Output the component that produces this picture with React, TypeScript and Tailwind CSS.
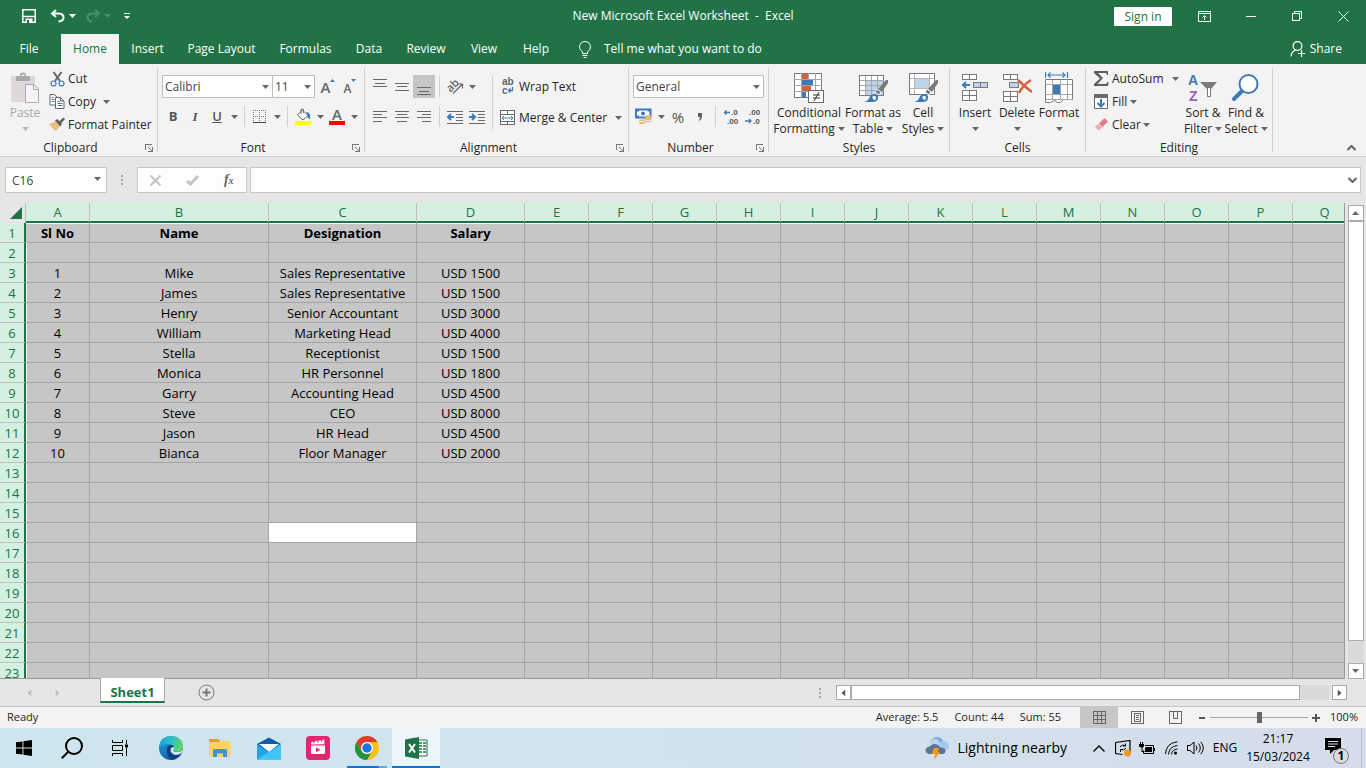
// src/App.tsx
import { type ReactNode } from "react";

const tabs = [
  { name: "Insert", width: "w-[57px]" },
  { name: "Page Layout", width: "w-[91px]" },
  { name: "Formulas", width: "w-[77px]" },
  { name: "Data", width: "w-[50px]" },
  { name: "Review", width: "w-[64px]" },
  { name: "View", width: "w-[52px]" },
  { name: "Help", width: "w-[52px]" },
];

const columns = "ABCDEFGHIJKLMNOPQ".split("");
const columnWidths = ["w-[64px]", "w-[179px]", "w-[148px]", "w-[108px]"];

const sheet: Record<number, string[]> = {
  1: ["Sl No", "Name", "Designation", "Salary"],
  3: ["1", "Mike", "Sales Representative", "USD 1500"],
  4: ["2", "James", "Sales Representative", "USD 1500"],
  5: ["3", "Henry", "Senior Accountant", "USD 3000"],
  6: ["4", "William", "Marketing Head", "USD 4000"],
  7: ["5", "Stella", "Receptionist", "USD 1500"],
  8: ["6", "Monica", "HR Personnel", "USD 1800"],
  9: ["7", "Garry", "Accounting Head", "USD 4500"],
  10: ["8", "Steve", "CEO", "USD 8000"],
  11: ["9", "Jason", "HR Head", "USD 4500"],
  12: ["10", "Bianca", "Floor Manager", "USD 2000"],
};

const rows = Array.from({ length: 23 }, (_, i) => i + 1);

function Caret({ className = "fill-[#666]" }: { className?: string }) {
  return (
    <svg className={`w-[7px] h-1 shrink-0 ${className}`} viewBox="0 0 7 4">
      <path d="M0 0h7L3.500 4z" />
    </svg>
  );
}

function Divider({ tall = false }: { tall?: boolean }) {
  return <div className={`w-px shrink-0 mx-1 bg-[#d0d0d0] ${tall ? "h-[54px]" : "h-[21px]"}`} />;
}

function Tool({ label, active, children }: { label: string; active?: boolean; children: ReactNode }) {
  return (
    <button aria-label={label} className={`flex items-center justify-center w-[22px] h-[23px] shrink-0 ${active ? "bg-[#c5c5c5]" : ""}`}>
      {children}
    </button>
  );
}

function DropArrow({ label }: { label: string }) {
  return (
    <button aria-label={label} className="flex items-center justify-center w-3 h-[23px] shrink-0">
      <Caret />
    </button>
  );
}

function Lines({ y, x }: { y: number[]; x: [number, number][] }) {
  return (
    <svg width="14" height="16" viewBox="0 0 14 16" stroke="#6a6a6a" shapeRendering="crispEdges">
      {y.map((v, i) => (
        <path key={v} d={`M${x[i][0]} ${v + 0.5}H${x[i][1]}`} />
      ))}
    </svg>
  );
}

function Group({ title, width, launcher, children }: { title: string; width: string; launcher?: boolean; children: ReactNode }) {
  return (
    <>
      <section className={`flex flex-col h-[89px] shrink-0 ${width}`}>
        <div className="flex flex-1">{children}</div>
        <div className="flex items-center h-4">
          <span className="flex-1 text-center">{title}</span>
          {launcher && (
            <button aria-label={`${title} settings`} className="w-4 h-4 flex items-center justify-center">
              <svg width="8" height="8" viewBox="0 0 8 8" fill="none" stroke="#777" shapeRendering="crispEdges">
                <path d="M.5 6V.5H7M3 3l4 4M7.500 3v4.500H3" />
              </svg>
            </button>
          )}
        </div>
      </section>
      <div className="w-px h-[84px] mt-px shrink-0 bg-[#d0d0d0]" />
    </>
  );
}

function BigButton({ icon, lines, width, drop = "inline", muted }: { icon: ReactNode; lines: string[]; width: string; drop?: "inline" | "below"; muted?: boolean }) {
  return (
    <button className={`flex flex-col items-center shrink-0 pt-1 whitespace-nowrap ${width} ${muted ? "text-[#a8a8a8]" : ""}`}>
      <span className="flex items-center justify-center h-[34px]">{icon}</span>
      {lines.map((line, i) => (
        <span key={line} className="flex items-center gap-[3px] h-4">
          {line}
          {drop === "inline" && i === lines.length - 1 && <Caret />}
        </span>
      ))}
      {drop === "below" && (
        <span className="flex items-center h-4">
          <Caret className={muted ? "fill-[#b5b5b5]" : "fill-[#666]"} />
        </span>
      )}
    </button>
  );
}

function RowButton({ icon, label }: { icon: ReactNode; label: string }) {
  return (
    <button className="flex items-center h-[23px] whitespace-nowrap">
      <span className="flex items-center justify-center w-[22px]">{icon}</span>
      {label}
    </button>
  );
}

/* ---------- ribbon drawings ---------- */

function PasteIcon() {
  return (
    <svg width="28" height="32" viewBox="0 0 28 32">
      <path d="M0 4h24v26H0z" fill="#dcd8dc" />
      <path d="M5 4h4V2.500q0-2 3-2t3 2V4h4v5H5z" fill="#a9a9a9" />
      <path d="M10.500 4h3V2.500h-3z" fill="#eee" />
      <path d="M14.500 12.500h8.500l4.500 4.500v13.500h-13z" fill="#f8f2fa" stroke="#aaa" />
      <path d="M22.500 13v4.500H28" fill="none" stroke="#aaa" />
    </svg>
  );
}

function CutIcon() {
  return (
    <svg width="15" height="16" viewBox="0 0 15 16" fill="none">
      <path d="M3.500 1l6.500 9M11.500 1L5 10" stroke="#666" strokeWidth="2" />
      <circle cx="3.500" cy="12.500" r="2.500" stroke="#3f7ab8" strokeWidth="1.200" />
      <circle cx="11.500" cy="12.500" r="2.500" stroke="#3f7ab8" strokeWidth="1.200" />
    </svg>
  );
}

function CopyIcon() {
  return (
    <svg width="16" height="15" viewBox="0 0 16 15" fill="#fff" stroke="#666">
      <path d="M1 .5h4.500L8 3v8H1z" />
      <path d="M2.500 3.500h2M2.500 5.500h3M2.500 7.500h3" stroke="#3f7ab8" />
      <path d="M6.500 3.500h5L15 7v7.500H6.500z" />
      <path d="M11.500 3.500V7H15" fill="none" />
      <path d="M8.500 7.500h2M8.500 9.500h5M8.500 11.500h5" stroke="#3f7ab8" />
    </svg>
  );
}

function PainterIcon() {
  return (
    <svg width="16" height="15" viewBox="0 0 16 15">
      <path d="M0 7.500L6 4l5 5.500L6.500 14z" fill="#e9bf7c" />
      <path d="M6 3.500L8.500 2 13 7l-2 2.500z" fill="#5e5e5e" />
      <path d="M10 4.500L14.500.500 16 2l-4 4.500z" fill="#5e5e5e" />
    </svg>
  );
}

function BordersIcon() {
  return (
    <svg width="14" height="14" viewBox="0 0 14 14" fill="none" stroke="#777" shapeRendering="crispEdges">
      <path d="M.5 0v13M12.500 0v13M6.500 0v13M0 .5h13M0 6.500h13" strokeDasharray="1 1" />
      <path d="M0 12.500h13" stroke="#444" />
    </svg>
  );
}

function FillColorIcon() {
  return (
    <svg width="17" height="17" viewBox="0 0 17 17">
      <path d="M2.500 7l5-5 5.500 5.500-5 4.500z" fill="#fff" stroke="#666" />
      <path d="M6 6V1.500q1.500-1.500 2.500 0V5" fill="none" stroke="#666" />
      <path d="M11 4q5 0 4 7-3-.5-2.500-4z" fill="#3f7ab8" />
      <path d="M0 13h16v4H0z" fill="#ff0" />
    </svg>
  );
}

function OrientationIcon() {
  return (
    <svg className="overflow-visible" width="17" height="17" viewBox="0 0 17 17">
      <text x="0" y="12" fontSize="11" fontWeight="600" fill="#666" transform="rotate(-45 5 9)">ab</text>
      <path d="M6 15.500l9-9M11 6h4.500v4.500" fill="none" stroke="#666" strokeWidth="1.200" />
    </svg>
  );
}

function IndentIcon({ out }: { out?: boolean }) {
  return (
    <svg width="16" height="14" viewBox="0 0 16 14">
      <path d="M0 1.500h16M9 4.500h7M9 7.500h7M9 10.500h7M0 13.500h16" stroke="#6a6a6a" shapeRendering="crispEdges" />
      <path d={out ? "M4 4L1 7l3 3M1 7h6" : "M3 4l3 3-3 3M0 7h6"} stroke="#3f7ab8" strokeWidth="2" fill="none" />
    </svg>
  );
}

function WrapIcon() {
  return (
    <svg className="overflow-visible" width="14" height="17" viewBox="0 0 14 17" fontFamily="Liberation Sans, sans-serif" fontWeight="700">
      <text x="1" y="7" fontSize="10" fill="#666">ab</text>
      <text x="1" y="16" fontSize="10" fill="#666">c</text>
      <path d="M11.500 9v3.500H7.500M9.500 10.500l-2 2 2 2" fill="none" stroke="#3f7ab8" strokeWidth="1.300" />
    </svg>
  );
}

function MergeIcon() {
  return (
    <svg width="16" height="16" viewBox="0 0 16 16" fill="#fff" stroke="#6a6a6a">
      <path d="M.5.5h14v14H.5zM.5 4.500h14M.5 11.500h14M7.500.5v4M7.500 11.500v3" shapeRendering="crispEdges" />
      <path d="M2 8h11M4 6L2 8l2 2M11 6l2 2-2 2" fill="none" stroke="#3f7ab8" />
    </svg>
  );
}

function CurrencyIcon() {
  return (
    <svg width="18" height="17" viewBox="0 0 18 17">
      <path d="M1 1.500h14.500v8H1z" fill="#fff" stroke="#3f7ab8" strokeWidth="2" />
      <path d="M1 1.500h3v2H1zM12.500 1.500h3v2h-3zM1 7.500h3v2H1z" fill="#3f7ab8" />
      <circle cx="8" cy="5.500" r="2" fill="#3f7ab8" />
      <ellipse cx="13" cy="8.500" rx="3.500" ry="1.500" fill="#e9bf7c" />
      <path d="M9.500 10.500h7V12h-7zM9.500 12.800h7v1.400h-7zM4 11.500h6V13H4zM4 14h6v1.500q-3 1.500-6 0z" fill="#e9bf7c" />
    </svg>
  );
}

function DecimalIcon({ more }: { more?: boolean }) {
  return (
    <svg className="overflow-visible" width="16" height="16" viewBox="0 0 16 16" fontFamily="Liberation Sans, sans-serif" fontSize="8" fontWeight="700" fill="#555">
      <text x={more ? 8 : 4} y="6">{more ? ".0" : ".00"}</text>
      <text x={more ? 4 : 8} y="15">{more ? ".00" : ".0"}</text>
      <path d={more ? "M7 3.500H1.500M3.500 1.500l-2 2 2 2" : "M0 12h6M4 10l2 2-2 2"} fill="none" stroke="#3f7ab8" strokeWidth="1.400" />
    </svg>
  );
}

function ConditionalIcon() {
  return (
    <svg width="30" height="32" viewBox="0 0 30 32" shapeRendering="crispEdges">
      <path d="M.5 1.500h27v24H.5z" fill="#fff" stroke="#7a7a7a" />
      <path d="M7.500 1v25M14.500 1v25M21.500 1v25M0 7.500h28M0 13.500h28M0 19.500h28" stroke="#a5a5a5" />
      <path d="M8 2h6v5H8zM8 14h9v5H8z" fill="#d8603e" />
      <path d="M8 8h11v5H8zM8 20h4v6H8z" fill="#3f7ab8" />
      <path d="M14.500 18.500h15v12h-15z" fill="#fff" stroke="#6a6a6a" />
      <path d="M19 23h7M19 26h7M25 20l-5 9" stroke="#333" shapeRendering="auto" />
    </svg>
  );
}

function Brush() {
  return (
    <>
      <path d="M29 8l2 0v3l-6 9-4-3z" fill="#7a7a7a" />
      <path d="M20 17l4 3-2 3-4-3z" fill="#7a7a7a" stroke="#f3f3f3" />
      <path d="M7 30q5-1 6-6 5-4 8 0 1 6-6 6z" fill="#3f7ab8" />
      <path d="M15 25q3-2 4 0 0 3-2 3z" fill="#fff" />
    </>
  );
}

function TableIcon() {
  return (
    <svg width="32" height="32" viewBox="0 0 32 32">
      <g shapeRendering="crispEdges">
        <path d="M2.500 3.500h24v20h-24z" fill="#fff" stroke="#7a7a7a" />
        <path d="M9 9h17v14H9z" fill="#bed3ea" />
        <path d="M8.500 4v19M14.500 4v19M20.500 4v19M3 8.500h24M3 13.500h24M3 18.500h24" stroke="#a5a5a5" />
      </g>
      <Brush />
    </svg>
  );
}

function CellStylesIcon() {
  return (
    <svg width="32" height="32" viewBox="0 0 32 32">
      <g shapeRendering="crispEdges">
        <path d="M2.500 1.500h25v21h-25z" fill="#fff" stroke="#7a7a7a" />
        <path d="M7.500 2v20M22.500 2v20M3 6.500h24M3 16.500h24" stroke="#b5b5b5" />
        <path d="M8 7h14v9H8z" fill="#bed3ea" />
      </g>
      <Brush />
    </svg>
  );
}

function InsertIcon() {
  return (
    <svg width="28" height="30" viewBox="0 0 28 30" fill="#fff" stroke="#7a7a7a" shapeRendering="crispEdges">
      <path d="M1.500 1.500h14v5h-14zM8.500 1.500v5M1.500 17.500h14v10h-14zM8.500 17.500v10M1.500 22.500h14" />
      <path d="M12.500 9.500h14v5h-14zM19.500 9.500v5" fill="#bed3ea" />
      <path d="M9 12H2M5 9l-3 3 3 3" fill="none" stroke="#3f7ab8" strokeWidth="2" shapeRendering="auto" />
    </svg>
  );
}

function DeleteIcon() {
  return (
    <svg width="30" height="30" viewBox="0 0 30 30" fill="#fff" stroke="#7a7a7a" shapeRendering="crispEdges">
      <path d="M1.500 1.500h14v5h-14zM8.500 1.500v5M1.500 18.500h14v10h-14zM8.500 18.500v10M1.500 23.500h14" />
      <path d="M7.500 9.500h9v5h-9z" fill="#bed3ea" />
      <path d="M16 7q7 7 14 12M29 7q-8 5-12 13" fill="none" stroke="#d8603e" strokeWidth="2.500" shapeRendering="auto" />
    </svg>
  );
}

function FormatIcon() {
  return (
    <svg width="28" height="32" viewBox="0 0 28 32" fill="#fff">
      <path d="M.5 0v6M22.500 0v6M3 3h17M5.500.500L3 3l2.500 2.500M17.500.500L20 3l-2.500 2.500" stroke="#3f7ab8" strokeWidth="1.200" fill="none" />
      <path d="M.5 7.500h27v20h-9l-3 3h-3l-3-2-4 2h-5z" stroke="#7a7a7a" />
      <path d="M7.500 8v19M15.500 8v19M22.500 8v19M1 12.500h26M1 22.500h26M1 27.500h26" stroke="#a5a5a5" shapeRendering="crispEdges" />
      <path d="M8 13h7v9H8z" fill="#3f7ab8" />
    </svg>
  );
}

function SortIcon() {
  return (
    <svg className="overflow-visible" width="30" height="30" viewBox="0 0 30 30" fontFamily="Liberation Sans, sans-serif" fontSize="14" fontWeight="700">
      <text x="0" y="12" fill="#3f7ab8">A</text>
      <text x="1" y="28" fill="#9862b8">Z</text>
      <path d="M12 9h17l-6 7v8h-4v-8z" fill="#7a7a7a" />
      <path d="M20 15h2v8h-2z" fill="#fff" />
    </svg>
  );
}

function FindIcon() {
  return (
    <svg width="30" height="30" viewBox="0 0 30 30">
      <path d="M3 26l9-9" stroke="#3f7ab8" strokeWidth="4" strokeLinecap="round" />
      <circle cx="17.500" cy="11" r="9" fill="#fff" stroke="#3f7ab8" strokeWidth="2" />
    </svg>
  );
}

/* ---------- window pieces ---------- */

function TitleBar() {
  return (
    <div className="grid grid-cols-[1fr_auto_1fr] items-start h-[34px] text-white">
      <div className="flex items-center h-8 pl-[18px]">
        <button aria-label="Save" className="w-[22px] flex justify-center">
          <svg width="14" height="14" viewBox="0 0 14 14" fill="none" stroke="#fff" strokeWidth="1.500">
            <path d="M.8.8h12.400v12.400H.8z" />
            <path d="M1 7.500h12" />
            <path d="M3.500 9.500h7V14h-7z" fill="#fff" stroke="none" />
            <path d="M5 11h2v3H5z" fill="#217346" stroke="none" />
          </svg>
        </button>
        <button aria-label="Undo" className="w-[35px] flex justify-center">
          <svg width="15" height="14" viewBox="0 0 15 14" fill="none" stroke="#fff" strokeWidth="2">
            <path d="M6 1L2 4.500 6 8M2 4.500h7q4.500.5 4.500 4t-5 4" />
          </svg>
        </button>
        <Caret className="fill-white -ml-[6px]" />
        <button aria-label="Redo" className="w-[34px] flex justify-center text-[#4a8f6a]">
          <svg width="15" height="14" viewBox="0 0 15 14" fill="none" stroke="currentColor" strokeWidth="2">
            <path d="M9 1l4 3.500L9 8M13 4.500H6q-4.500.5-4.500 4t5 4" />
          </svg>
        </button>
        <Caret className="fill-[#4a8f6a] -ml-[6px]" />
        <button aria-label="Customize Quick Access Toolbar" className="w-8 flex justify-center">
          <svg width="6" height="6" viewBox="0 0 6 6" fill="#fff">
            <path d="M0 0h6v1H0zM0 3h6L3 6z" />
          </svg>
        </button>
      </div>
      <h1 className="h-8 leading-8 whitespace-pre">New Microsoft Excel Worksheet  -  Excel</h1>
      <div className="flex items-center justify-end h-8">
        <button className="bg-white text-[#217346] w-[58px] h-[19px] leading-[19px] rounded-[1px] mr-[9px]">Sign in</button>
        <button aria-label="Ribbon Display Options" className="w-[47px] flex justify-center">
          <svg width="13" height="11" viewBox="0 0 13 11" fill="none" stroke="#fff">
            <path d="M.5.5h12v10H.5zM.5 2.500h12M6.500 9V5M4.500 6.500l2-2 2 2" />
          </svg>
        </button>
        <button aria-label="Minimize" className="w-[46px] flex justify-center">
          <svg width="10" height="1"><path d="M0 0h10v1H0z" fill="#fff" /></svg>
        </button>
        <button aria-label="Restore" className="w-[46px] flex justify-center">
          <svg width="10" height="10" viewBox="0 0 10 10" fill="none" stroke="#fff" shapeRendering="crispEdges">
            <path d="M.5 2.500h7v7h-7zM2.500 2.500v-2h7v7h-2" />
          </svg>
        </button>
        <button aria-label="Close" className="w-[46px] flex justify-center">
          <svg width="11" height="11" viewBox="0 0 11 11" stroke="#fff"><path d="M.5.5l10 10M10.500.5l-10 10" /></svg>
        </button>
      </div>
    </div>
  );
}

function TabBar() {
  return (
    <nav className="flex h-[30px] text-white whitespace-nowrap">
      <button className="w-[58px] mr-[3px]">File</button>
      <button className="w-[58px] bg-[#f3f3f3] text-[#217346]">Home</button>
      {tabs.map((tab) => (
        <button key={tab.name} className={tab.width}>{tab.name}</button>
      ))}
      <button className="flex items-center gap-[13px] ml-[17px]">
        <svg width="12" height="17" viewBox="0 0 12 17" fill="none" stroke="#fff">
          <path d="M3.500 12.500V11Q.5 8.500.5 5.800.8.800 6 .5q5.200.3 5.500 5.300 0 2.700-3 5.200v1.500zM3.500 14.500h5M4.500 16.500h3" />
        </svg>
        Tell me what you want to do
      </button>
      <button className="flex items-center gap-1 ml-auto mr-6">
        <svg width="16" height="16" viewBox="0 0 16 16" fill="none" stroke="#fff" strokeWidth="1.200">
          <circle cx="7.500" cy="5" r="4.400" />
          <path d="M1 15.500q.5-5 4.500-6.500M8 12.500h7M11.500 9v7" />
        </svg>
        Share
      </button>
    </nav>
  );
}

function Combo({ label, value, width }: { label: string; value: string; width: string }) {
  return (
    <div className={`relative ${width}`}>
      <select aria-label={label} className="appearance-none w-full h-[23px] pl-[2px] bg-white border border-[#bebebe] text-[#444] outline-none">
        <option>{value}</option>
      </select>
      <Caret className="absolute right-1 top-[10px] pointer-events-none fill-[#666]" />
    </div>
  );
}

function Ribbon() {
  return (
    <div className="flex h-[93px] pt-[3px] bg-[#f3f3f3] border-b border-[#d0d0d0] text-[#262626]">
      <Group title="Clipboard" width="w-[157px]" launcher>
        <BigButton icon={<PasteIcon />} lines={["Paste"]} width="w-[46px] pl-1" drop="below" muted />
        <div className="flex flex-col">
          <RowButton icon={<CutIcon />} label="Cut" />
          <div className="flex gap-1">
            <RowButton icon={<CopyIcon />} label="Copy" />
            <DropArrow label="Copy options" />
          </div>
          <RowButton icon={<PainterIcon />} label="Format Painter" />
        </div>
      </Group>

      <Group title="Font" width="w-[206px]" launcher>
        <div className="flex flex-col gap-[7px] pt-2 pl-1">
          <div className="flex">
            <Combo label="Font" value="Calibri" width="w-[111px]" />
            <Combo label="Font size" value="11" width="w-[43px] -ml-px" />
            <div className="flex pl-[2px]">
              <Tool label="Increase font size">
                <span className="text-[15px] font-semibold text-[#666]">A</span>
                <svg className="mb-3" width="5" height="3"><path d="M0 3h5L2.500 0z" fill="#3f7ab8" /></svg>
              </Tool>
              <Tool label="Decrease font size">
                <span className="text-xs font-semibold text-[#666] pt-1">A</span>
                <svg className="mb-3" width="5" height="3"><path d="M0 0h5L2.500 3z" fill="#3f7ab8" /></svg>
              </Tool>
            </div>
          </div>
          <div className="flex items-center text-[13px] text-[#555]">
            <Tool label="Bold"><b>B</b></Tool>
            <Tool label="Italic"><i className="font-['Liberation_Serif',serif] font-bold">I</i></Tool>
            <Tool label="Underline"><span className="font-semibold underline">U</span></Tool>
            <DropArrow label="Underline options" />
            <Divider />
            <Tool label="Borders"><BordersIcon /></Tool>
            <DropArrow label="Border options" />
            <Divider />
            <Tool label="Fill color"><FillColorIcon /></Tool>
            <DropArrow label="Fill color options" />
            <Tool label="Font color"><span className="w-4 h-[17px] leading-3 text-[15px] font-semibold text-[#666] border-b-4 border-[#f00]">A</span></Tool>
            <DropArrow label="Font color options" />
          </div>
        </div>
      </Group>

      <Group title="Alignment" width="w-[263px]" launcher>
        <div className="flex pt-2 pl-1">
          <div className="flex flex-col gap-[7px]">
            <div className="flex items-center">
              <Tool label="Top align"><Lines y={[0, 4, 7]} x={[[0, 14], [2, 12], [0, 14]]} /></Tool>
              <Tool label="Middle align"><Lines y={[4, 7, 11]} x={[[0, 14], [2, 12], [0, 14]]} /></Tool>
              <Tool label="Bottom align" active><Lines y={[8, 12, 15]} x={[[0, 14], [2, 12], [0, 14]]} /></Tool>
              <Divider />
              <Tool label="Orientation"><OrientationIcon /></Tool>
              <DropArrow label="Orientation options" />
            </div>
            <div className="flex items-center">
              <Tool label="Align left"><Lines y={[2, 5, 8, 12]} x={[[0, 14], [0, 9], [0, 14], [0, 9]]} /></Tool>
              <Tool label="Center"><Lines y={[2, 5, 8, 12]} x={[[0, 14], [2, 12], [0, 14], [2, 12]]} /></Tool>
              <Tool label="Align right"><Lines y={[2, 5, 8, 12]} x={[[0, 14], [5, 14], [0, 14], [5, 14]]} /></Tool>
              <Divider />
              <Tool label="Decrease indent"><IndentIcon out /></Tool>
              <Tool label="Increase indent"><IndentIcon /></Tool>
            </div>
          </div>
          <Divider tall />
          <div className="flex flex-col gap-2">
            <RowButton icon={<WrapIcon />} label="Wrap Text" />
            <div className="flex gap-[5px]">
              <RowButton icon={<MergeIcon />} label="Merge & Center" />
              <DropArrow label="Merge options" />
            </div>
          </div>
        </div>
      </Group>

      <Group title="Number" width="w-[139px]" launcher>
        <div className="flex flex-col gap-[7px] pt-2 pl-1">
          <Combo label="Number format" value="General" width="w-[131px]" />
          <div className="flex items-center text-[#555]">
            <Tool label="Accounting format"><CurrencyIcon /></Tool>
            <DropArrow label="Accounting options" />
            <Tool label="Percent style"><span className="text-[15px]">%</span></Tool>
            <Tool label="Comma style">
              <svg width="6" height="8" viewBox="0 0 6 8" fill="#5e5e5e"><path d="M1 0h4v4q-.5 3-3.500 4 1.500-2 1.500-4H1z" /></svg>
            </Tool>
            <Divider />
            <Tool label="Increase decimal"><DecimalIcon more /></Tool>
            <Tool label="Decrease decimal"><DecimalIcon /></Tool>
          </div>
        </div>
      </Group>

      <Group title="Styles" width="w-[180px]">
        <div className="flex pl-[3px]">
          <BigButton icon={<ConditionalIcon />} lines={["Conditional", "Formatting"]} width="w-[74px]" />
          <BigButton icon={<TableIcon />} lines={["Format as", "Table"]} width="w-[54px]" />
          <BigButton icon={<CellStylesIcon />} lines={["Cell", "Styles"]} width="w-[46px]" />
        </div>
      </Group>

      <Group title="Cells" width="w-[135px]">
        <div className="flex pl-1">
          <BigButton icon={<InsertIcon />} lines={["Insert"]} width="w-[42px]" drop="below" />
          <BigButton icon={<DeleteIcon />} lines={["Delete"]} width="w-[42px]" drop="below" />
          <BigButton icon={<FormatIcon />} lines={["Format"]} width="w-[42px]" drop="below" />
        </div>
      </Group>

      <Group title="Editing" width="w-[186px]">
        <div className="flex pl-1">
          <div className="flex flex-col w-[91px]">
            <div className="flex justify-between">
              <RowButton
                icon={<svg width="15" height="15" viewBox="0 0 15 15"><path d="M0 0h14v4h-1l-1-2H4l5 5-5.500 6H12l1.500-2h1l-.5 4H0v-2l6-5.500L0 2z" fill="#5e5e5e" /></svg>}
                label="AutoSum"
              />
              <DropArrow label="AutoSum options" />
            </div>
            <div className="flex">
              <RowButton
                icon={
                  <svg width="14" height="15" viewBox="0 0 14 15">
                    <path d="M.5.5h13v14H.5z" fill="#fff" stroke="#6a6a6a" />
                    <path d="M0 0h14v4H0z" fill="#6a6a6a" />
                    <path d="M7 5v8M3.500 9L7 12.500 10.500 9" fill="none" stroke="#3f7ab8" strokeWidth="2" />
                  </svg>
                }
                label="Fill"
              />
              <DropArrow label="Fill options" />
            </div>
            <div className="flex">
              <RowButton
                icon={
                  <svg width="13" height="13" viewBox="0 0 13 13">
                    <path d="M4 5.500L9.500 0 13 3.500 7.500 9z" fill="#e6788c" />
                    <path d="M3.500 6L0 9l3.500 3.500 3.500-3z" fill="#f0a5b2" />
                  </svg>
                }
                label="Clear"
              />
              <DropArrow label="Clear options" />
            </div>
          </div>
          <BigButton icon={<SortIcon />} lines={["Sort &", "Filter"]} width="w-11" />
          <BigButton icon={<FindIcon />} lines={["Find &", "Select"]} width="w-[42px]" />
        </div>
      </Group>

      <button aria-label="Collapse the Ribbon" className="self-end ml-auto w-[30px] h-4 flex items-center justify-center">
        <svg width="9" height="6" viewBox="0 0 9 6" fill="none" stroke="#666" strokeWidth="2"><path d="M.5 5l4-4 4 4" /></svg>
      </button>
    </div>
  );
}

function Grip() {
  return (
    <div className="flex flex-col gap-[2px]">
      <i className="size-[2px] bg-[#a8a8a8]" />
      <i className="size-[2px] bg-[#a8a8a8]" />
      <i className="size-[2px] bg-[#a8a8a8]" />
    </div>
  );
}

function FormulaBar() {
  return (
    <div className="flex items-center h-[46px] px-[5px]">
      <div className="relative w-[102px]">
        <input aria-label="Name Box" defaultValue="C16" className="w-full h-[26px] pl-[6px] bg-[#fdfdfd] border border-[#c6c6c6] text-[#444] outline-none" />
        <Caret className="absolute right-[6px] top-[10px] fill-[#666]" />
      </div>
      <div className="w-[30px] flex justify-center"><Grip /></div>
      <div className="flex items-center justify-around w-[110px] h-[26px] bg-[#fdfdfd] border border-[#c6c6c6] mr-[3px]">
        <button aria-label="Cancel">
          <svg width="11" height="11" viewBox="0 0 11 11" stroke="#c4c4c4" strokeWidth="2"><path d="M.5.5l10 10M10.500.5l-10 10" /></svg>
        </button>
        <button aria-label="Enter">
          <svg width="13" height="11" viewBox="0 0 13 11" fill="none" stroke="#c4c4c4" strokeWidth="3"><path d="M1 6l3.500 3L12 1" /></svg>
        </button>
        <button aria-label="Insert Function" className="font-['Liberation_Serif',serif] italic font-bold text-sm text-[#666]">
          f<sub className="text-[10px] bottom-0">x</sub>
        </button>
      </div>
      <div className="relative flex-1">
        <input aria-label="Formula Bar" className="w-full h-[26px] px-2 bg-[#fdfdfd] border border-[#c6c6c6] outline-none" />
        <svg className="absolute right-1 top-[10px]" width="9" height="6" viewBox="0 0 9 6" fill="none" stroke="#666" strokeWidth="2"><path d="M.5 1l4 4 4-4" /></svg>
      </div>
    </div>
  );
}

function Grid() {
  return (
    <div className="flex flex-1 min-h-0">
      <div className="flex-1 min-w-0 overflow-hidden border-r border-b border-[#9a9a9a]">
        <table className="table-fixed w-[1357px] border-separate border-spacing-0 text-center">
          <colgroup>
            <col className="w-[26px]" />
            {columns.map((c, i) => (
              <col key={c} className={columnWidths[i] ?? "w-[64px]"} />
            ))}
          </colgroup>
          <thead>
            <tr className="h-5 text-[#217346] text-[13px] leading-4">
              <th aria-label="Select all" className="p-0 border-r border-[#bfbfbf] bg-[#e6e6e6]">
                <svg className="ml-[10px]" width="12" height="12"><path d="M12 0v12H0z" fill="#217346" /></svg>
              </th>
              {columns.map((c) => (
                <th key={c} className="p-0 font-normal bg-[#d3f0e0] border-r border-r-[#bfbfbf] border-b-2 border-b-[#217346]">{c}</th>
              ))}
            </tr>
          </thead>
          <tbody>
            {rows.map((r) => (
              <tr key={r} className={`h-5 ${r === 1 ? "font-bold [&>td]:shadow-[inset_0_1px_0_#fff]" : ""}`}>
                <th className="p-0 font-normal text-[13px] leading-4 text-[#217346] bg-[#d3f0e0] border-b border-b-[#bfbfbf] border-r-2 border-r-[#217346]">{r}</th>
                {columns.map((c, i) => (
                  <td
                    key={c}
                    className={`p-0 text-[13px] leading-4 text-black whitespace-nowrap border-r border-b border-[#a5a5a5] ${
                      r === 16 && c === "C" ? "bg-white" : "bg-[#c6c6c6]"
                    } ${i === 0 ? "shadow-[inset_1px_0_0_#fff]" : ""}`}
                  >
                    {sheet[r]?.[i]}
                  </td>
                ))}
              </tr>
            ))}
          </tbody>
        </table>
      </div>
      <div className="flex flex-col items-center w-[21px] pt-[2px]">
        <button aria-label="Scroll up" className="size-4 shrink-0 flex items-center justify-center bg-white border border-[#ababab]">
          <Caret className="rotate-180 fill-[#666]" />
        </button>
        <div className="flex-1 w-4 bg-[#dadada]">
          <div className="h-[95%] bg-white border border-[#ababab]" />
        </div>
        <button aria-label="Scroll down" className="size-4 shrink-0 flex items-center justify-center bg-white border border-[#ababab]">
          <Caret />
        </button>
      </div>
    </div>
  );
}

function SheetTabs() {
  return (
    <div className="flex h-[27px]">
      <div className="flex items-center gap-[21px] w-[100px] pl-[26px]">
        <button aria-label="Previous sheet"><Caret className="rotate-90 fill-[#bcbcbc]" /></button>
        <button aria-label="Next sheet"><Caret className="-rotate-90 fill-[#bcbcbc]" /></button>
      </div>
      <button className="w-[65px] h-[25px] pt-1 -mt-px bg-white border-x border-x-[#ababab] border-b-2 border-b-[#217346] text-[#217346] text-[13px] leading-4 font-bold">Sheet1</button>
      <button aria-label="New sheet" className="w-[82px] flex items-center justify-center">
        <svg width="17" height="17" viewBox="0 0 17 17" fill="none" stroke="#777">
          <circle cx="8.500" cy="8.500" r="7.500" />
          <path d="M4.500 8.500h8M8.500 4.500v8" strokeWidth="2" />
        </svg>
      </button>
      <div className="flex items-center ml-auto w-[547px]">
        <div className="w-[17px]"><Grip /></div>
        <button aria-label="Scroll left" className="size-[15px] flex items-center justify-center bg-white border border-[#ababab]">
          <Caret className="rotate-90 fill-[#555]" />
        </button>
        <div className="w-[478px] h-[15px] bg-[#dadada]">
          <div className="w-[449px] h-full bg-white border border-[#ababab]" />
        </div>
        <button aria-label="Scroll right" className="size-[15px] ml-[3px] flex items-center justify-center bg-white border border-[#ababab]">
          <Caret className="-rotate-90 fill-[#555]" />
        </button>
      </div>
    </div>
  );
}

function StatusBar() {
  return (
    <footer className="flex items-center h-[22px] pl-[7px] pr-2 bg-[#f3f3f3] border-t border-[#c6c6c6] text-[11px] text-[#262626] whitespace-nowrap">
      <span>Ready</span>
      <div className="flex gap-4 ml-auto mr-[19px]">
        <span>Average: 5.5</span>
        <span>Count: 44</span>
        <span>Sum: 55</span>
      </div>
      <button aria-label="Normal view" className="w-[38px] h-full flex items-center justify-center bg-[#c6c6c6]">
        <svg width="13" height="13" viewBox="0 0 13 13" fill="none" stroke="#666" shapeRendering="crispEdges"><path d="M.5.5h12v12H.5zM4.500 0v13M8.500 0v13M0 4.500h13M0 8.500h13" /></svg>
      </button>
      <button aria-label="Page layout view" className="w-[38px] h-full flex items-center justify-center">
        <svg width="13" height="13" viewBox="0 0 13 13" fill="none" stroke="#666" shapeRendering="crispEdges"><path d="M.5.5h12v12H.5zM3.500 2.500h6v8h-6zM5 4.500h3M5 6.500h3M5 8.500h3" /></svg>
      </button>
      <button aria-label="Page break view" className="w-[38px] h-full flex items-center justify-center">
        <svg width="13" height="13" viewBox="0 0 13 13" fill="none" stroke="#666" shapeRendering="crispEdges"><path d="M.5.5h12v12H.5zM4.500 0v7.500h4M8.500 0v7.500" /></svg>
      </button>
      <button aria-label="Zoom out" className="w-4 flex justify-center"><svg width="6" height="2"><path d="M0 0h6v2H0z" fill="#555" /></svg></button>
      <input
        type="range"
        aria-label="Zoom"
        defaultValue={50}
        className="appearance-none w-[98px] h-px bg-[#a5a5a5] [&::-webkit-slider-thumb]:appearance-none [&::-webkit-slider-thumb]:w-[5px] [&::-webkit-slider-thumb]:h-[11px] [&::-webkit-slider-thumb]:bg-[#666]"
      />
      <button aria-label="Zoom in" className="w-4 flex justify-center"><svg width="8" height="8"><path d="M3 0h2v3h3v2H5v3H3V5H0V3h3z" fill="#555" /></svg></button>
      <span className="w-[34px] text-right">100%</span>
    </footer>
  );
}

function TaskButton({ label, className = "", children }: { label: string; className?: string; children: ReactNode }) {
  return (
    <button aria-label={label} className={`flex items-center justify-center w-12 h-full shrink-0 ${className}`}>
      {children}
    </button>
  );
}

function Taskbar() {
  return (
    <div className="flex items-center h-10 bg-linear-to-r from-[#cfe5ee] via-[#d0e4ee] to-[#d6dcea] text-black whitespace-nowrap">
      <TaskButton label="Start">
        <svg width="16" height="16" viewBox="0 0 16 16"><path d="M0 2.300L6.500 1.400v6.200H0zM7.400 1.200L16 0v7.600H7.400zM0 8.400h6.500v6.200L0 13.700zM7.400 8.400H16V16l-8.600-1.200z" /></svg>
      </TaskButton>
      <TaskButton label="Search">
        <svg width="22" height="22" viewBox="0 0 22 22" fill="none" stroke="#000" strokeWidth="2"><circle cx="13" cy="9" r="8" /><path d="M7.500 14.500L.8 21.200" /></svg>
      </TaskButton>
      <TaskButton label="Task View">
        <svg width="16" height="16" viewBox="0 0 16 16" fill="none" stroke="#000"><path d="M.5 0v2.500h10V0M.5 5.500h10v5H.5zM.5 16v-2.500h10V16M14.500 0v4M14.500 8v8" /><path d="M13 4.500h3v3h-3z" fill="#000" stroke="none" /></svg>
      </TaskButton>

      <div className="flex h-full gap-px ml-[3px]">
        <TaskButton label="Microsoft Edge">
          <svg width="24" height="24" viewBox="0 0 24 24">
            <defs>
              <linearGradient id="edgeTop" x1="0" y1="0.3" x2="1" y2="0.5">
                <stop offset="0" stopColor="#1b9fe0" />
                <stop offset="0.5" stopColor="#2fc0c8" />
                <stop offset="1" stopColor="#62d957" />
              </linearGradient>
              <linearGradient id="edgeLeft" x1="0" y1="0" x2="0.6" y2="1">
                <stop offset="0" stopColor="#2aa5e8" />
                <stop offset="1" stopColor="#0c59a4" />
              </linearGradient>
            </defs>
            <circle cx="12" cy="12" r="12" fill="url(#edgeLeft)" />
            <path d="M0 11Q1.500 0 12 0q11.500.5 12 10.500 0 5-5.500 5.500-5 0-4-2.500 1.500-3-1.500-4.500Q7 6 0 11z" fill="url(#edgeTop)" />
            <path d="M8 12q1-3.500 5-3 3 1.500 1.500 4.500-1 2.500 4 2.500 2.500 0 4.500-1.500Q20 23 13 24q-6-3-5-12z" fill="#123f82" />
            <path d="M13.500 11q3 0 1 3-.5 2 4 2 3 0 5-2l.5 1q-2.500 4-7.500 4-5-1.500-5-5 0-2 2-3z" fill="#d0e6ee" />
          </svg>
        </TaskButton>
        <TaskButton label="File Explorer">
          <svg width="22" height="19" viewBox="0 0 22 19">
            <path d="M0 0h9l2 2v4H0z" fill="#e3a21a" />
            <path d="M0 3h10l2-1h9.500v16H0z" fill="#fcd462" />
            <path d="M4 18v-6.500q0-1.500 1.500-1.500h11q1.500 0 1.500 1.500V18h-4v-3.500H8V18z" fill="#3c93d8" />
          </svg>
        </TaskButton>
        <TaskButton label="Mail">
          <svg width="24" height="23" viewBox="0 0 24 23">
            <path d="M0 7l12-6.500L24 7v15H0z" fill="#0c5ca8" />
            <path d="M2 7h20l-10 8z" fill="#f4f8fb" />
            <path d="M0 7l12 8.500L24 7v15.500H0z" fill="#26a4e8" />
            <path d="M0 22.500L24 7v15.500z" fill="#42c4f5" />
          </svg>
        </TaskButton>
        <TaskButton label="Clipchamp">
          <svg width="24" height="24" viewBox="0 0 24 24">
            <rect width="24" height="24" rx="4" fill="#e3266f" />
            <path d="M5 9.500v7q0 1.500 1.500 1.500h11q1.500 0 1.500-1.500v-7zM5 8.500V6.500l2-1 1 2.200 1-2.700 2-.3.700 2.500 1-2.800 2-.3.700 2.500 1-2.800 2-.3v4.700z" fill="#fff" />
            <path d="M10 11.500l4.500 2.300-4.500 2.400z" fill="#e3266f" />
          </svg>
        </TaskButton>
        <TaskButton label="Google Chrome" className="relative">
          <svg width="24" height="24" viewBox="0 0 24 24">
            <circle cx="12" cy="12" r="12" fill="#fbc116" />
            <path d="M1.600 6A12 12 0 0 1 22.400 6H12a6 6 0 0 0-5.200 9z" fill="#e33b2e" />
            <path d="M1.600 6A12 12 0 0 0 12 24l5.200-9A6 6 0 0 1 6.800 15z" fill="#229342" />
            <circle cx="12" cy="12" r="6" fill="#fff" />
            <circle cx="12" cy="12" r="4.700" fill="#1a73e8" />
          </svg>
          <span className="absolute left-1 bottom-0 w-10 h-[2px] bg-[#0a78d6] border-r-8 border-[#6aa9de]" />
        </TaskButton>
        <TaskButton label="Excel" className="relative bg-[#ecf5f9]">
          <svg width="23" height="22" viewBox="0 0 23 22">
            <path d="M12 3h10v16H12z" fill="#fff" stroke="#217346" />
            <path d="M14 6h3M18 6h3M14 9h3M18 9h3M14 12h3M18 12h3M14 15h3M18 15h3" stroke="#217346" strokeWidth="1.500" />
            <path d="M0 2.500L14 0v22L0 19.500z" fill="#217346" />
            <path d="M4 7l6 8.500M10 7l-6 8.500" stroke="#fff" strokeWidth="2" />
          </svg>
          <span className="absolute inset-x-0 bottom-0 h-[2px] bg-[#0a78d6]" />
        </TaskButton>
      </div>

      <button className="flex items-center gap-2 ml-auto mr-5 text-sm">
        <svg width="25" height="24" viewBox="0 0 25 24">
          <circle cx="12" cy="8" r="7" fill="#7fa9e3" />
          <circle cx="19" cy="10" r="5" fill="#a8c8f0" />
          <circle cx="10" cy="8" r="5" fill="#bcd3f4" />
          <path d="M4 18q-4-1-3.500-4.500Q2 10 5 10.500 8 7 12 8.500q2.500 1 3 3 5-.5 5.500 3 0 3.500-3 3.500z" fill="#5c7690" />
          <path d="M9 12h5l-1.500 4H15l-6 8 1-6H7z" fill="#f8981d" />
        </svg>
        Lightning nearby
      </button>
      <div className="flex items-center h-full">
        <button aria-label="Show hidden icons" className="w-6 flex justify-center">
          <svg width="12" height="7" viewBox="0 0 12 7" fill="none" stroke="#000" strokeWidth="1.300"><path d="M.5 6.500L6 1l5.500 5.500" /></svg>
        </button>
        <button aria-label="Update" className="w-6 flex justify-center">
          <svg width="16" height="17" viewBox="0 0 16 17" fill="none" stroke="#000">
            <path d="M.5 2.500L15 .5v13M.5 2.500v11l7 1" strokeWidth="1.200" />
            <path d="M5 7q2-3 5-1.500M10.500 3.500v2.500H8M11 8q-2 3-5 1.500M5.500 12V9.500H8" />
            <circle cx="12.500" cy="13" r="3.500" fill="#f7940f" stroke="none" />
          </svg>
        </button>
        <button aria-label="Battery" className="w-6 flex justify-center">
          <svg width="16" height="13" viewBox="0 0 16 13">
            <path d="M1 0h1v2h1V0h1v2h1v2q0 1-1.500 1.500V9h2v1H2.500V5.500Q0 5 0 4V2h1z" />
            <path d="M6 3.500h8.500v8H4.500v-3" fill="none" stroke="#000" />
            <path d="M7 5h6v5H6V6zM15 6h1v3h-1z" />
          </svg>
        </button>
        <button aria-label="Network" className="w-6 flex justify-center">
          <svg width="13" height="14" viewBox="0 0 13 14" fill="none" stroke="#000">
            <path d="M.5 13Q1 2 12.500.8M3.500 13.500q.5-8 9-9M6.500 13.500q.5-5 6-5.500" />
            <circle cx="10.500" cy="12" r="1.500" fill="#000" stroke="none" />
          </svg>
        </button>
        <button aria-label="Volume" className="w-6 flex justify-center">
          <svg width="17" height="14" viewBox="0 0 17 14" fill="none" stroke="#000">
            <path d="M.5 4.500h2.500l4-3.500v12L3 9.500H.5zM9 4.500q2 2.500 0 5M11.500 2.500q3.500 4.500 0 9M13.800.8q5 6.200 0 12.400" />
          </svg>
        </button>
        <button className="w-9 text-xs">ENG</button>
        <button className="w-[70px] text-xs leading-[18px]">
          <span className="block">21:17</span>
          <span className="block">15/03/2024</span>
        </button>
        <button aria-label="Notifications" className="relative w-[49px] h-full flex items-center pl-3 border-r border-[#b5bdcc] mr-1">
          <svg className="mb-1" width="16" height="16" viewBox="0 0 16 16"><path d="M0 0h16v12H9l-4 4v-4H0z" /><path d="M3 3.500h10M3 6h10M3 8.500h7" stroke="#d6dcea" /></svg>
          <span className="absolute left-5 bottom-1 size-4 leading-[14px] rounded-full border border-[#777] bg-[#dcdcdc] text-xs font-bold">1</span>
        </button>
      </div>
    </div>
  );
}

export default function App() {
  return (
    <div className="flex flex-col h-screen overflow-hidden bg-[#e6e6e6] font-['Open_Sans','Segoe_UI',sans-serif] text-xs">
      <header className="bg-[#217346]">
        <TitleBar />
        <TabBar />
      </header>
      <Ribbon />
      <FormulaBar />
      <Grid />
      <SheetTabs />
      <StatusBar />
      <Taskbar />
    </div>
  );
}
